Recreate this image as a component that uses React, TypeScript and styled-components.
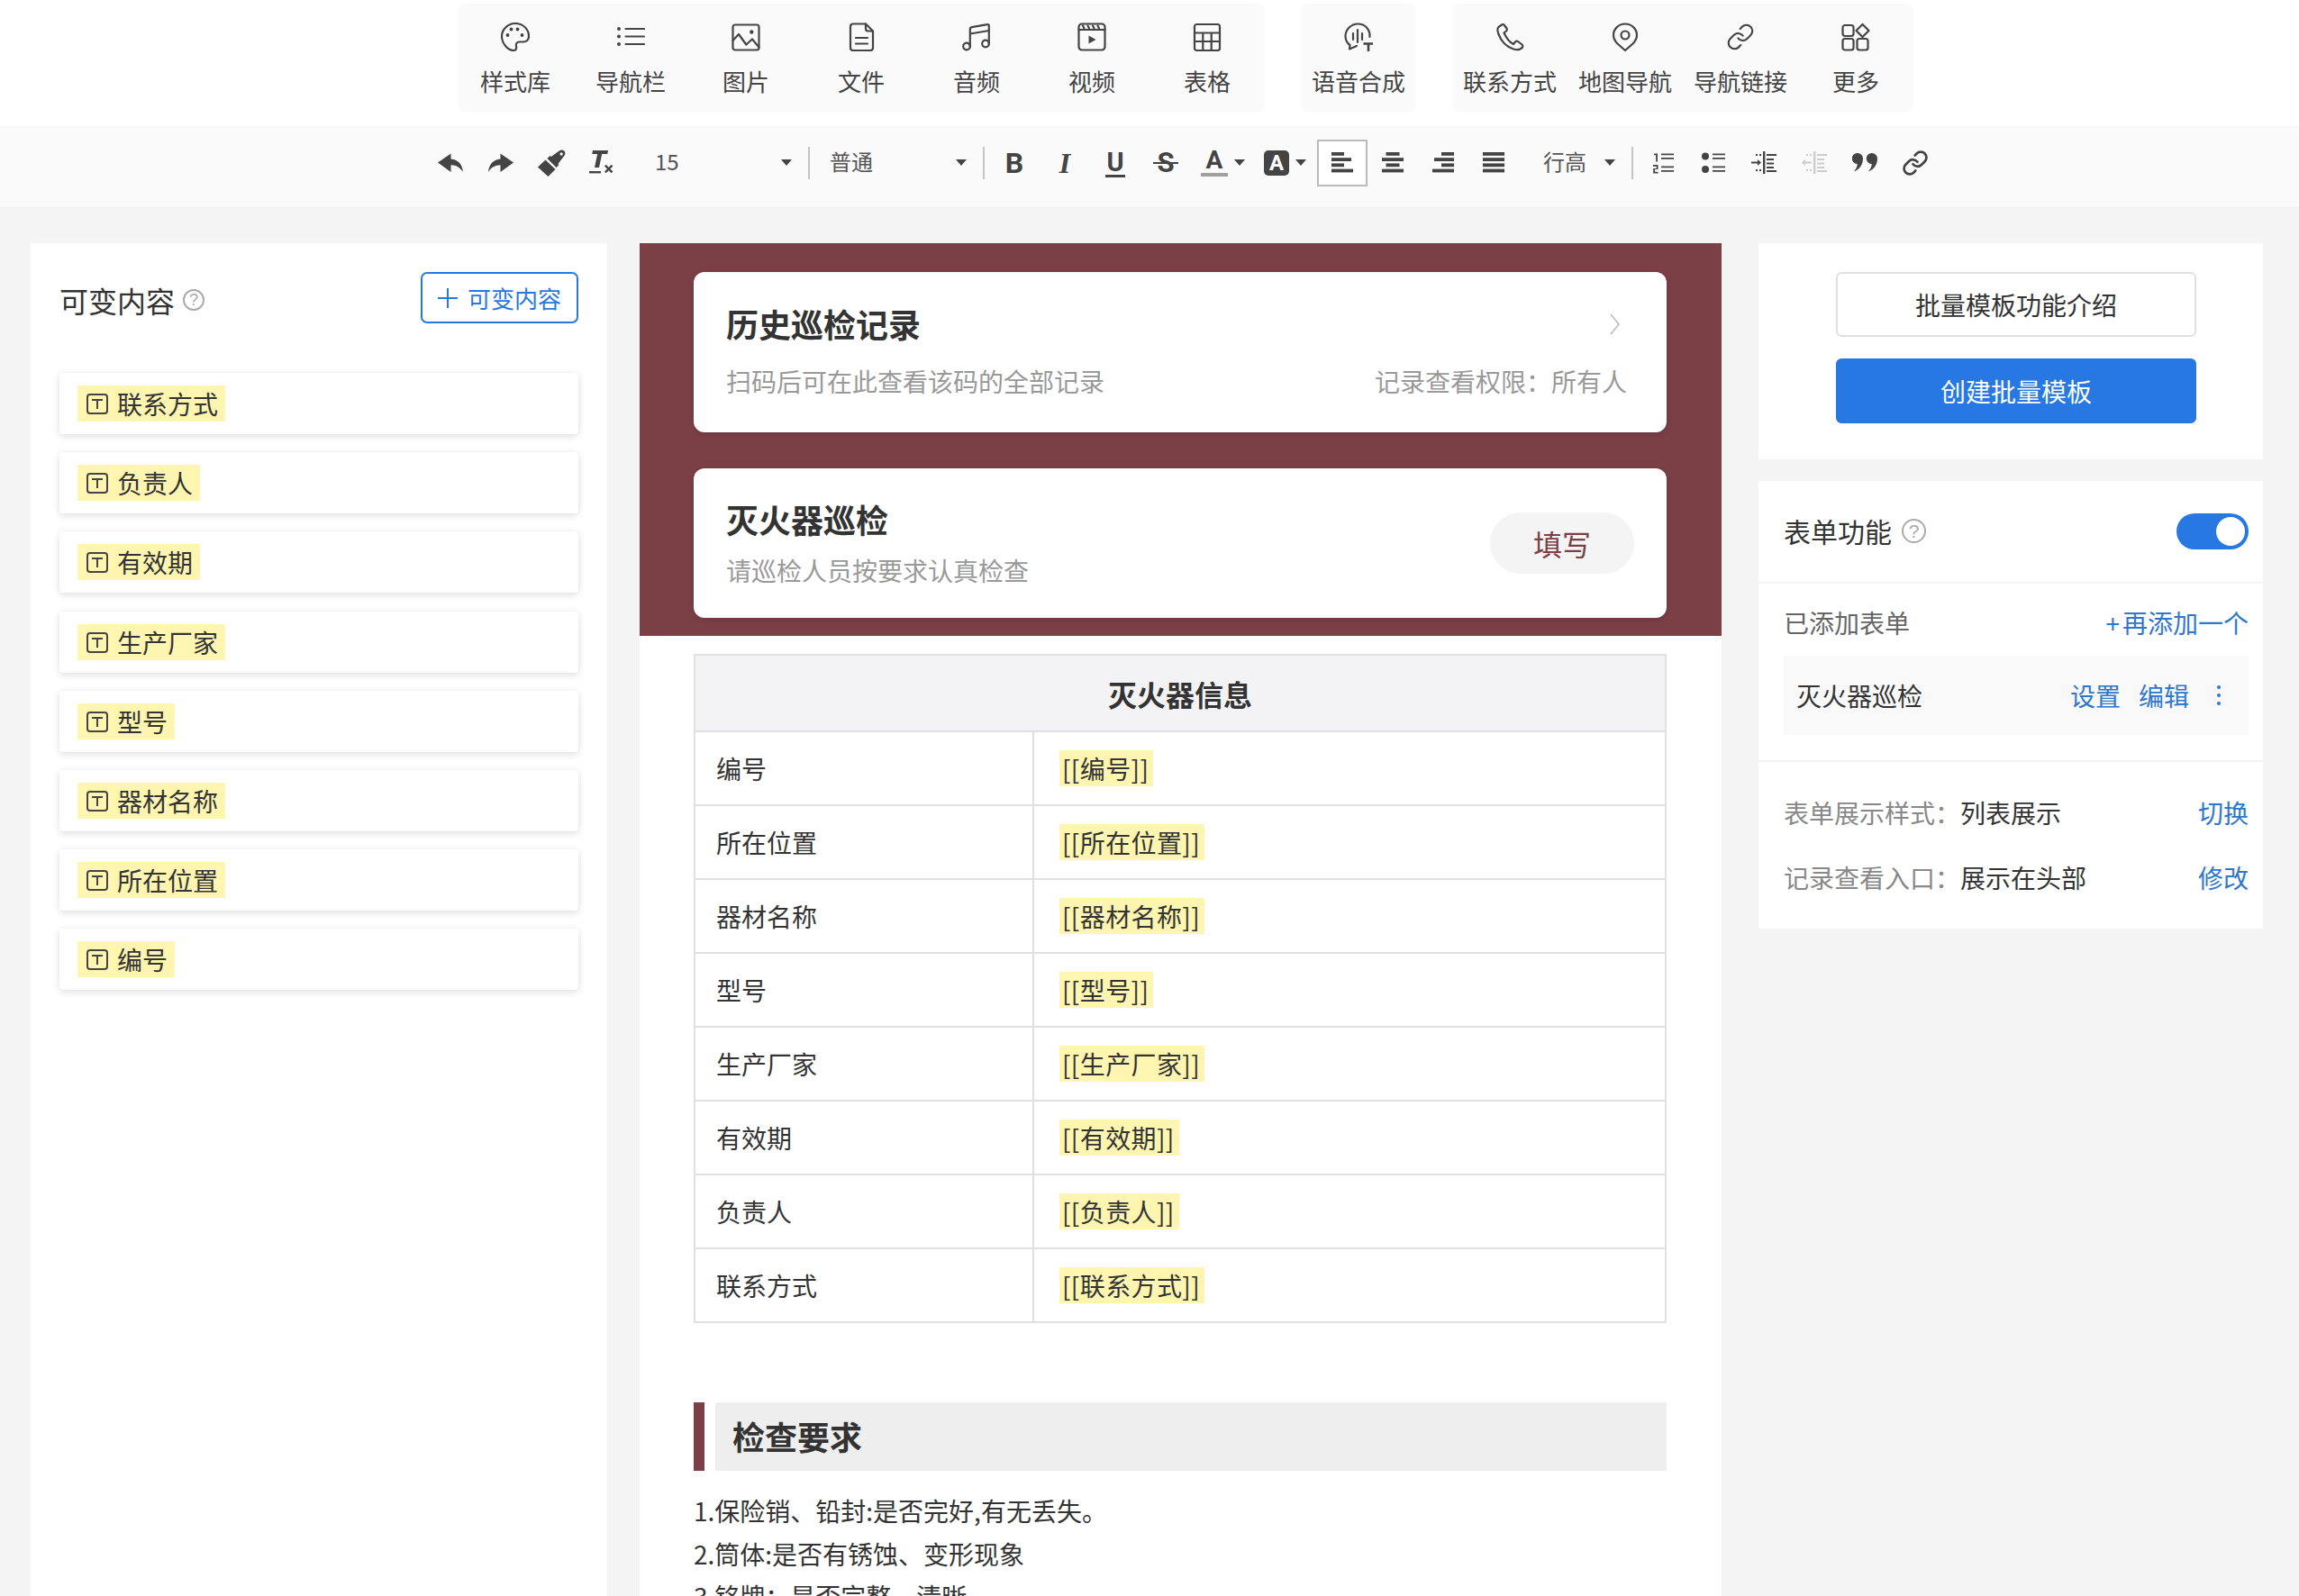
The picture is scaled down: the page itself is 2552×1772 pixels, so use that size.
import React from 'react';
import styled, { createGlobalStyle } from 'styled-components';

const GlobalStyle = createGlobalStyle`
  html, body {
    margin: 0;
    padding: 0;
    background: #f4f4f4;
    overflow: hidden;
  }
  * { box-sizing: border-box; }
`;

const Page = styled.div`
  width: 2552px;
  height: 1772px;
  display: flex;
  flex-direction: column;
  overflow: hidden;
  font-family: 'Noto Sans CJK SC', sans-serif;
  color: #333;
`;

/* top insert bar */
const InsertBar = styled.div`
  height: 140px;
  flex: none;
  background: #fff;
  padding: 4px 0 0 508px;
  display: flex;
  gap: 40px;
`;

const ToolGroup = styled.div`
  height: 120px;
  display: flex;
  background: #fafafa;
  border-radius: 8px;
`;

const ToolItem = styled.div`
  width: 128px;
  padding-top: 21px;
  display: flex;
  flex-direction: column;
  align-items: center;
  gap: 15px;
`;

const ToolLabel = styled.span`
  font-size: 26px;
  line-height: 36px;
  color: #444;
  white-space: nowrap;
`;

const LineIcon = styled.svg`
  width: 32px;
  height: 32px;
  fill: none;
  stroke: #444;
  stroke-width: 2.2;
  stroke-linecap: round;
  stroke-linejoin: round;
  display: block;
`;

const ChainIcon = styled(LineIcon)`
  width: 30px;
  height: 30px;
`;

const Solid = styled.g`
  fill: #444;
  stroke: none;
`;

/* format toolbar */
const FormatBar = styled.div`
  height: 90px;
  flex: none;
  background: #fafafa;
  border-top: 1px solid #f5f5f5;
  padding: 0 0 10px 472px;
  display: flex;
  align-items: center;
`;

const FmtButton = styled.div<{ $active?: boolean }>`
  width: 56px;
  height: 52px;
  flex: none;
  display: flex;
  align-items: center;
  justify-content: center;
  background: ${(p) => (p.$active ? '#fff' : 'transparent')};
  border: ${(p) => (p.$active ? '2px solid #bbb' : 'none')};
  color: #444;
`;

const ColorButton = styled.div`
  width: 70px;
  height: 52px;
  flex: none;
  padding-left: 11px;
  display: flex;
  align-items: center;
  gap: 7px;
`;

const Picker = styled.div<{ $width: number; $left: number }>`
  width: ${(p) => p.$width}px;
  flex: none;
  padding: 0 18px 0 ${(p) => p.$left}px;
  display: flex;
  align-items: center;
  justify-content: space-between;
  font-size: 24px;
  color: #555;
`;

const PickerLabel = styled.span`
  margin-bottom: 5px;
`;

const Caret = styled.i`
  width: 0;
  height: 0;
  flex: none;
  border-left: 6px solid transparent;
  border-right: 6px solid transparent;
  border-top: 7px solid #444;
`;

const Divider = styled.div<{ $after?: number }>`
  width: 2px;
  height: 36px;
  flex: none;
  background: #c4c4c4;
  margin-right: ${(p) => p.$after ?? 0}px;
`;

const Glyph = styled.span<{ $size: number; $serif?: boolean }>`
  font-family: ${(p) => (p.$serif ? "'Liberation Serif'" : 'Roboto')}, sans-serif;
  font-size: ${(p) => p.$size}px;
  font-weight: 700;
  font-style: ${(p) => (p.$serif ? 'italic' : 'normal')};
  line-height: 1;
  color: #444;
`;

const UnderGlyph = styled(Glyph)`
  border-bottom: 3px solid #444;
  padding: 0 1px 2px;
  line-height: 24px;
  margin-top: 3px;
`;

const StrikeGlyph = styled(Glyph)`
  position: relative;
  &::after {
    content: '';
    position: absolute;
    left: -4px;
    right: -4px;
    top: 15px;
    height: 2px;
    background: #444;
  }
`;

const ColorA = styled.span`
  width: 30px;
  display: flex;
  flex-direction: column;
  align-items: center;
  font-family: Roboto, sans-serif;
  font-weight: 700;
  font-size: 28px;
  line-height: 26px;
  color: #444;
  &::after {
    content: '';
    width: 30px;
    height: 4px;
    margin-top: 1px;
    background: #a0a0a0;
  }
`;

const BoxA = styled.span`
  width: 28px;
  height: 28px;
  border-radius: 5px;
  background: #444;
  color: #fff;
  display: flex;
  align-items: center;
  justify-content: center;
  font-family: Roboto, sans-serif;
  font-weight: 700;
  font-size: 24px;
  line-height: 1;
`;

const FilledIcon = styled.svg<{ $color?: string }>`
  display: block;
  fill: ${(p) => p.$color ?? '#444'};
  stroke: none;
`;

/* columns */
const Body = styled.div`
  flex: 1;
  min-height: 0;
  display: flex;
  padding: 40px 0 0 34px;
  background: #f4f4f4;
`;

const LeftPanel = styled.div`
  width: 640px;
  flex: none;
  background: #fff;
  padding: 32px;
`;

const PanelHead = styled.div`
  height: 57px;
  display: flex;
  align-items: center;
  justify-content: space-between;
`;

const PanelTitle = styled.div`
  display: flex;
  align-items: center;
  gap: 9px;
  font-size: 32px;
  line-height: 44px;
  padding-top: 5px;
  color: #333;
`;

const Help = styled.span<{ $size: number }>`
  width: ${(p) => p.$size}px;
  height: ${(p) => p.$size}px;
  flex: none;
  border: 2px solid #aaa;
  border-radius: 50%;
  color: #aaa;
  font-family: 'Liberation Sans', sans-serif;
  font-size: ${(p) => p.$size - 6}px;
  line-height: 1;
  display: flex;
  align-items: center;
  justify-content: center;
`;

const AddButton = styled.div`
  width: 175px;
  height: 57px;
  border: 2px solid #2878e3;
  border-radius: 7px;
  display: flex;
  align-items: center;
  justify-content: center;
  gap: 11px;
  font-size: 26px;
  color: #2878e3;
`;

const PlusIcon = styled.svg`
  width: 22px;
  height: 22px;
  stroke: #2878e3;
  stroke-width: 2;
  display: block;
`;

const VarList = styled.div`
  margin-top: 55px;
  display: flex;
  flex-direction: column;
  gap: 20.2px;
`;

const VarItem = styled.div`
  height: 68px;
  background: #fff;
  border-radius: 4px;
  box-shadow: 0 2px 8px rgba(0, 0, 0, 0.14);
  padding-left: 20px;
  display: flex;
  align-items: center;
`;

const VarTag = styled.span`
  height: 40px;
  background: #fdf5b0;
  padding: 0 8px 0 10px;
  display: flex;
  align-items: center;
  gap: 10px;
  font-size: 28px;
  color: #333;
`;

const TagIcon = styled.svg`
  width: 24px;
  height: 24px;
  fill: none;
  stroke: #444;
  stroke-width: 2;
  display: block;
`;

const CenterPanel = styled.div`
  width: 1201px;
  flex: none;
  margin-left: 36px;
  background: #fff;
`;

const Banner = styled.div`
  background: #7b3f46;
  padding: 32px 61px 20px 60px;
  display: flex;
  flex-direction: column;
  gap: 40px;
`;

const HistoryCard = styled.div`
  height: 178px;
  background: #fff;
  border-radius: 12px;
  box-shadow: 0 2px 6px rgba(0, 0, 0, 0.12);
  padding: 32px 44px 0 36px;
`;

const CardRow = styled.div`
  display: flex;
  align-items: center;
  justify-content: space-between;
`;

const CardTitle = styled.div`
  font-size: 36px;
  font-weight: 700;
  line-height: 50px;
  color: #333;
`;

const CardSub = styled.div<{ $top: number }>`
  font-size: 28px;
  line-height: 40px;
  color: #999;
  margin-top: ${(p) => p.$top}px;
`;

const Chevron = styled.svg`
  width: 11px;
  height: 24px;
  margin: 2px 8px 0 0;
  fill: none;
  stroke: #bbb;
  stroke-width: 1.6;
  display: block;
`;

const FormCard = styled.div`
  height: 166px;
  background: #fff;
  border-radius: 12px;
  box-shadow: 0 2px 6px rgba(0, 0, 0, 0.12);
  padding: 0 36px;
  display: flex;
  align-items: center;
  justify-content: space-between;
`;

const FormCardText = styled.div`
  padding-bottom: 2px;
`;

const FillButton = styled.div`
  width: 160px;
  height: 68px;
  border-radius: 34px;
  background: #f4f4f4;
  color: #7b3f46;
  font-size: 32px;
  display: flex;
  align-items: center;
  justify-content: center;
`;

const Content = styled.div`
  padding: 20px 61px 0 60px;
`;

const InfoTable = styled.table`
  width: 1080px;
  border-collapse: collapse;
  table-layout: fixed;
  border: 2px solid #e0e0e0;
  font-size: 28px;
  color: #333;
  th, td {
    border: 2px solid #e0e0e0;
    font-weight: 400;
    padding: 0;
  }
  th {
    height: 85px;
    background: #f3f3f5;
    font-size: 32px;
    font-weight: 700;
  }
  td {
    height: 82px;
    padding-left: 23px;
  }
  td + td {
    padding-left: 28px;
  }
`;

const Mark = styled.span`
  display: inline-block;
  height: 40px;
  line-height: 40px;
  padding: 0 5px 0 3px;
  letter-spacing: 0.4px;
  background: #fdf5b0;
`;

const Heading = styled.div`
  margin-top: 88px;
  height: 76px;
  display: flex;
  gap: 12px;
  &::before {
    content: '';
    width: 12px;
    background: #7b3f46;
  }
`;

const HeadingText = styled.div`
  flex: 1;
  background: #eee;
  padding-left: 19px;
  font-size: 36px;
  font-weight: 700;
  line-height: 74px;
  color: #333;
`;

const Notes = styled.div`
  margin-top: 21px;
  font-size: 28px;
  line-height: 47.5px;
  color: #333;
`;

const RightColumn = styled.div`
  width: 560px;
  flex: none;
  margin-left: 41px;
  display: flex;
  flex-direction: column;
  gap: 24px;
`;

const BatchCard = styled.div`
  background: #fff;
  padding: 32px 0 40px 86px;
  display: flex;
  flex-direction: column;
  gap: 24px;
`;

const BatchButton = styled.div<{ $primary?: boolean }>`
  width: 400px;
  height: 72px;
  border-radius: 6px;
  border: 2px solid ${(p) => (p.$primary ? '#2878e3' : '#e0e0e0')};
  background: ${(p) => (p.$primary ? '#2878e3' : '#fff')};
  color: ${(p) => (p.$primary ? '#fff' : '#333')};
  font-size: 28px;
  display: flex;
  align-items: center;
  justify-content: center;
`;

const FormPanel = styled.div`
  background: #fff;
`;

const Section = styled.div`
  padding: 0 16px 0 28px;
  & + & {
    border-top: 2px solid #f4f4f4;
  }
`;

const SwitchRow = styled.div`
  height: 112px;
  display: flex;
  align-items: center;
  justify-content: space-between;
`;

const SwitchLabel = styled.div`
  display: flex;
  align-items: center;
  gap: 11px;
  padding-bottom: 2px;
  font-size: 30px;
  color: #333;
`;

const Toggle = styled.div`
  width: 80px;
  height: 40px;
  border-radius: 20px;
  background: #2878e3;
  padding: 4px;
  display: flex;
  justify-content: flex-end;
  &::after {
    content: '';
    width: 32px;
    height: 32px;
    border-radius: 50%;
    background: #fff;
  }
`;

const AddedHead = styled.div`
  padding-top: 23px;
  height: 80px;
  display: flex;
  justify-content: space-between;
  font-size: 28px;
  line-height: 40px;
  color: #666;
`;

const LinkText = styled.span`
  color: #2f77cc;
  font-size: 28px;
  line-height: 40px;
  white-space: nowrap;
`;

const LinkPlus = styled.span`
  margin-right: 3px;
`;

const FormRow = styled.div`
  height: 88px;
  margin-bottom: 28px;
  background: #f9f9f9;
  padding: 0 31px 0 14px;
  display: flex;
  align-items: center;
  font-size: 28px;
  color: #333;
`;

const FormName = styled.span`
  flex: 1;
`;

const RowActions = styled.div`
  display: flex;
  align-items: center;
  gap: 20px;
`;

const Kebab = styled.span`
  width: 4px;
  margin-left: 11px;
  display: flex;
  flex-direction: column;
  gap: 5px;
  i {
    width: 4px;
    height: 4px;
    border-radius: 50%;
    background: #2f77cc;
  }
`;

const SettingRows = styled.div`
  padding: 36px 0 37px;
  display: flex;
  flex-direction: column;
  gap: 32px;
`;

const SettingRow = styled.div`
  display: flex;
  font-size: 28px;
  line-height: 40px;
`;

const SettingKey = styled.span`
  width: 196px;
  flex: none;
  color: #888;
  white-space: nowrap;
`;

const SettingValue = styled.span`
  flex: 1;
  color: #333;
`;

/* icons */
const linkPaths = (
  <>
    <path d="M10 13a5 5 0 0 0 7.54.54l3-3a5 5 0 0 0-7.07-7.07l-1.72 1.71" />
    <path d="M14 11a5 5 0 0 0-7.54-.54l-3 3a5 5 0 0 0 7.07 7.07l1.71-1.71" />
  </>
);

const tools: [string, React.ReactNode][] = [
  ['样式库', (
    <>
      <path d="M16 1C8 1 1 7.5 1 15.5 1 23.5 8 31 14 31c3 0 3.5-2.5 3-5-.5-3 1-4.5 4-4.5h4c3.5 0 6-2.5 6-6.5C31 7 24 1 16 1Z" />
      <Solid>
        <circle cx="7.5" cy="14" r="1.9" />
        <circle cx="11.5" cy="7.5" r="1.9" />
        <circle cx="18.5" cy="7.5" r="1.9" />
        <circle cx="23.5" cy="14" r="1.9" />
      </Solid>
    </>
  )],
  ['导航栏', (
    <>
      <path d="M10.5 7H31M10.5 15.5H31M10.5 24H31" />
      <Solid>
        <circle cx="3" cy="7" r="2" />
        <circle cx="3" cy="15.5" r="2" />
        <circle cx="3" cy="24" r="2" />
      </Solid>
    </>
  )],
  ['图片', (
    <>
      <rect x="1.5" y="2.5" width="29" height="28" rx="2.5" />
      <path d="M1.5 20 8 13l8.3 11.5L23 18.5l7.5 9" />
      <Solid><circle cx="22.3" cy="10.5" r="2.2" /></Solid>
    </>
  )],
  ['文件', (
    <>
      <path d="M7 1.5h14l8 8V28a3 3 0 0 1-3 3H7a3 3 0 0 1-3-3V4.5a3 3 0 0 1 3-3Z" />
      <path d="M21 1.5V7a2.5 2.5 0 0 0 2.5 2.5H29M10 17h13M10 23.5h13" />
    </>
  )],
  ['音频', (
    <>
      <circle cx="5" cy="26.5" r="3.8" />
      <circle cx="26" cy="23.5" r="3.8" />
      <path d="M8.8 26.5V7.5c0-1.3.8-2.2 2-2.4L28 2.2c1-.2 1.8.4 1.8 1.4v20M8.8 12.5l21-3.5" />
    </>
  )],
  ['视频', (
    <>
      <rect x="1.5" y="1.5" width="29" height="29" rx="3.5" />
      <path d="M1.5 8h29M6 3.5l1.5 3M11.5 3.5l1.5 3M17 3.5l1.5 3M22.5 3.5l1.5 3" />
      <Solid><path d="M12.5 14.5l8 4.5-8 4.5Z" /></Solid>
    </>
  )],
  ['表格', (
    <>
      <rect x="2" y="2" width="28" height="29" rx="2.5" />
      <path d="M2 11.5h28M2 21h28M11.3 11.5V31M20.7 11.5V31" />
    </>
  )],
];

const ttsItem: [string, React.ReactNode] = ['语音合成', (
  <>
    <path d="M28.5 16C29 7.5 23 1.5 15.5 1.5 8 1.5 1.5 7.5 1.5 15c0 4.5 2 8 5 10l-.5 4.5 8-3.5" />
    <path d="M10 12v7M15 8v14M20 12v7" />
    <path strokeWidth="2.6" d="M22.5 23.5h9M27 23.5V32" />
  </>
)];

const contactTools: [string, React.ReactNode][] = [
  ['联系方式', (
    <path d="M7 2.5 3.5 5C1.8 6.5 2 9 3.5 13c2.5 7 8.5 14 16.5 16.5 5 1.5 8 .5 10-2 .5-1 .5-2-.5-3L25 21c-1-.5-2-.5-3 .5L20 24c-5-2.5-8-7-10.5-12.5L12 9.5c1-1 1-2 .5-3l-3-4c-.5-.5-1.5-.5-2.5 0Z" />
  )],
  ['地图导航', (
    <g transform="translate(1 0)">
      <path d="M15 31 6.5 23.5C3.5 20.5 2 17.5 2 14 2 7 8 1.5 15 1.5S28 7 28 14c0 3.5-1.5 6.5-4.5 9.5Z" />
      <circle cx="15" cy="14" r="4.5" />
    </g>
  )],
  ['导航链接', (
    <g transform="scale(1.333)" strokeWidth="1.6">{linkPaths}</g>
  )],
  ['更多', (
    <>
      <rect x="1.5" y="3" width="12" height="12" rx="2.5" />
      <rect x="1.5" y="18" width="12" height="12.5" rx="2.5" />
      <rect x="17.5" y="18" width="12" height="12.5" rx="2.5" />
      <path d="M23.5 2 30.5 9l-7 7-7-7Z" />
    </>
  )],
];

const ToolCell = ({ label, icon }: { label: string; icon: React.ReactNode }) => (
  <ToolItem>
    <LineIcon viewBox="0 0 32 32">{icon}</LineIcon>
    <ToolLabel>{label}</ToolLabel>
  </ToolItem>
);

const undoPath = 'M0 10.5 14.5.5v6C22 7 27 12 28 21c-3-5-7.5-7.5-13.5-7.7V21Z';

const Bars = ({ rows }: { rows: [number, number][] }) => (
  <FilledIcon width="24" height="23" viewBox="0 0 24 23">
    {rows.map(([x, w], i) => (
      <rect key={i} x={x} y={i * 6.2} width={w} height="3.8" />
    ))}
  </FilledIcon>
);

const DoubleLines = () => (
  <path d="M0 0h14v1.8H0zM0 4.5h14v1.8H0zM0 14h14v1.8H0zM0 18.5h14v1.8H0z" />
);

const IndentIcon = ({ out }: { out?: boolean }) => (
  <FilledIcon $color={out ? '#ccc' : '#444'} width="28" height="25" viewBox="0 0 28 25">
    <rect x="13" width="2.4" height="25" />
    <path d="M17 3h11v2H17zM17 8h8v2h-8zM17 12.5h8v2h-8zM17 17h8v2h-8zM17 21h11v2H17z" />
    <path d="M5 3h2v2H5zM9 3h2v2H9zM5 20h2v2H5zM9 20h2v2H9z" />
    {out ? (
      <path d="M0 12.5l4-3.5v2.5h7v2H4V16Z" />
    ) : (
      <path d="M11 12.5l-4-3.500v2.500H0v2h7V16Z" />
    )}
  </FilledIcon>
);

const QuoteShape = 'M6 0a6 6 0 0 1 6 6c0 7-4 12-10 14.5 3-3.5 4-6.5 3.5-8.5A6 6 0 0 1 6 0Z';

const variables = ['联系方式', '负责人', '有效期', '生产厂家', '型号', '器材名称', '所在位置', '编号'];
const rows = ['编号', '所在位置', '器材名称', '型号', '生产厂家', '有效期', '负责人', '联系方式'];

const App = () => {
  return (
    <Page>
      <GlobalStyle />
      <InsertBar>
        <ToolGroup>
          {tools.map(([label, icon]) => <ToolCell key={label} label={label} icon={icon} />)}
        </ToolGroup>
        <ToolGroup>
          <ToolCell label={ttsItem[0]} icon={ttsItem[1]} />
        </ToolGroup>
        <ToolGroup>
          {contactTools.map(([label, icon]) => <ToolCell key={label} label={label} icon={icon} />)}
        </ToolGroup>
      </InsertBar>

      <FormatBar>
        <FmtButton>
          <FilledIcon width="28" height="22" viewBox="0 0 28 22"><path d={undoPath} /></FilledIcon>
        </FmtButton>
        <FmtButton>
          <FilledIcon width="28" height="22" viewBox="0 0 28 22">
            <path transform="matrix(-1 0 0 1 28 0)" d={undoPath} />
          </FilledIcon>
        </FmtButton>
        <FmtButton>
          <FilledIcon width="31" height="30" viewBox="0 0 31 30">
            <path d="M0 19.5 8.5 11.5 19.5 22 11.5 30Z" />
            <path d="M10.5 10l3-3 10 10-3 3Z" />
            <path d="M14 8.5 23.8 1.5c1.5-1.5 4-1.5 5.5 0s1.5 4 0 5.5L22 16.5ZM25 3.8a1.6 1.6 0 1 0 2.3 2.3A1.6 1.6 0 0 0 25 3.8Z" fillRule="evenodd" />
          </FilledIcon>
        </FmtButton>
        <FmtButton>
          <FilledIcon width="28" height="28" viewBox="0 0 28 28">
            <path d="M4 0h17l-.8 4h-6L11 19H6L9.2 4h-6Z" />
            <path d="M0 23h13v2.4H0z" />
            <path d="M17 17.5l1.7-1.7 3 3 3-3 1.7 1.7-3 3 3 3-1.7 1.7-3-3-3 3-1.7-1.7 3-3Z" />
          </FilledIcon>
        </FmtButton>
        <Picker $width={201} $left={31}><PickerLabel>15</PickerLabel><Caret /></Picker>
        <Divider />
        <Picker $width={192} $left={22}><PickerLabel>普通</PickerLabel><Caret /></Picker>
        <Divider $after={5} />
        <FmtButton><Glyph $size={32}>B</Glyph></FmtButton>
        <FmtButton><Glyph $size={32} $serif>I</Glyph></FmtButton>
        <FmtButton><UnderGlyph $size={29}>U</UnderGlyph></FmtButton>
        <FmtButton><StrikeGlyph $size={31}>S</StrikeGlyph></FmtButton>
        <ColorButton><ColorA>A</ColorA><Caret /></ColorButton>
        <ColorButton><BoxA>A</BoxA><Caret /></ColorButton>
        <FmtButton $active>
          <Bars rows={[[0, 14], [0, 22], [0, 14], [0, 24]]} />
        </FmtButton>
        <FmtButton>
          <Bars rows={[[4.5, 15], [0, 24], [4.5, 15], [0, 24]]} />
        </FmtButton>
        <FmtButton>
          <Bars rows={[[10, 14], [2, 22], [10, 14], [0, 24]]} />
        </FmtButton>
        <FmtButton>
          <Bars rows={[[0, 24], [0, 24], [0, 24], [0, 24]]} />
        </FmtButton>
        <Picker $width={125} $left={27}><PickerLabel>行高</PickerLabel><Caret /></Picker>
        <Divider $after={5} />
        <FmtButton>
          <FilledIcon width="24" height="24" viewBox="0 0 24 24">
            <g transform="translate(10 1.5)"><DoubleLines /></g>
            <path d="M2 1.5h4v9H4.2V3.3H2z" />
            <path d="M1 14h5.5v5H3v2.8h3.5v1.7H1.2V18h3.500v-2.300H1z" />
          </FilledIcon>
        </FmtButton>
        <FmtButton>
          <FilledIcon width="26" height="24" viewBox="0 0 26 24">
            <circle cx="4" cy="4.5" r="4" />
            <circle cx="4" cy="19" r="4" />
            <g transform="translate(12 1.5)"><DoubleLines /></g>
          </FilledIcon>
        </FmtButton>
        <FmtButton><IndentIcon /></FmtButton>
        <FmtButton><IndentIcon out /></FmtButton>
        <FmtButton>
          <FilledIcon width="28" height="21" viewBox="0 0 28 21">
            <path d={QuoteShape} />
            <path transform="translate(16 0)" d={QuoteShape} />
          </FilledIcon>
        </FmtButton>
        <FmtButton>
          <ChainIcon viewBox="0 0 24 24">{linkPaths}</ChainIcon>
        </FmtButton>
      </FormatBar>

      <Body>
        <LeftPanel>
          <PanelHead>
            <PanelTitle>可变内容<Help $size={24}>?</Help></PanelTitle>
            <AddButton>
              <PlusIcon viewBox="0 0 22 22"><path d="M11 0v22M0 11h22" /></PlusIcon>
              可变内容
            </AddButton>
          </PanelHead>
          <VarList>
            {variables.map((v) => (
              <VarItem key={v}>
                <VarTag>
                  <TagIcon viewBox="0 0 24 24">
                    <rect x="1" y="2" width="22" height="21" rx="3" />
                    <path d="M6 8h12M12 8v10" />
                  </TagIcon>
                  {v}
                </VarTag>
              </VarItem>
            ))}
          </VarList>
        </LeftPanel>

        <CenterPanel>
          <Banner>
            <HistoryCard>
              <CardRow>
                <CardTitle>历史巡检记录</CardTitle>
                <Chevron viewBox="0 0 11 24"><path d="M1 1l9 11-9 11" /></Chevron>
              </CardRow>
              <CardRow>
                <CardSub $top={19}>扫码后可在此查看该码的全部记录</CardSub>
                <CardSub $top={19}>记录查看权限：所有人</CardSub>
              </CardRow>
            </HistoryCard>
            <FormCard>
              <FormCardText>
                <CardTitle>灭火器巡检</CardTitle>
                <CardSub $top={12}>请巡检人员按要求认真检查</CardSub>
              </FormCardText>
              <FillButton>填写</FillButton>
            </FormCard>
          </Banner>
          <Content>
            <InfoTable>
              <colgroup>
                <col width="376" />
                <col />
              </colgroup>
              <thead>
                <tr><th colSpan={2}>灭火器信息</th></tr>
              </thead>
              <tbody>
                {rows.map((r) => (
                  <tr key={r}>
                    <td>{r}</td>
                    <td><Mark>[[{r}]]</Mark></td>
                  </tr>
                ))}
              </tbody>
            </InfoTable>
            <Heading><HeadingText>检查要求</HeadingText></Heading>
            <Notes>
              <div>1.保险销、铅封:是否完好,有无丢失。</div>
              <div>2.筒体:是否有锈蚀、变形现象</div>
              <div>3.铭牌：是否完整、清晰</div>
            </Notes>
          </Content>
        </CenterPanel>

        <RightColumn>
          <BatchCard>
            <BatchButton>批量模板功能介绍</BatchButton>
            <BatchButton $primary>创建批量模板</BatchButton>
          </BatchCard>
          <FormPanel>
            <Section>
              <SwitchRow>
                <SwitchLabel>表单功能<Help $size={27}>?</Help></SwitchLabel>
                <Toggle />
              </SwitchRow>
            </Section>
            <Section>
              <AddedHead>已添加表单<LinkText><LinkPlus>+</LinkPlus>再添加一个</LinkText></AddedHead>
              <FormRow>
                <FormName>灭火器巡检</FormName>
                <RowActions>
                  <LinkText>设置</LinkText>
                  <LinkText>编辑</LinkText>
                  <Kebab><i /><i /><i /></Kebab>
                </RowActions>
              </FormRow>
            </Section>
            <Section>
              <SettingRows>
                <SettingRow>
                  <SettingKey>表单展示样式：</SettingKey>
                  <SettingValue>列表展示</SettingValue>
                  <LinkText>切换</LinkText>
                </SettingRow>
                <SettingRow>
                  <SettingKey>记录查看入口：</SettingKey>
                  <SettingValue>展示在头部</SettingValue>
                  <LinkText>修改</LinkText>
                </SettingRow>
              </SettingRows>
            </Section>
          </FormPanel>
        </RightColumn>
      </Body>
    </Page>
  );
};

export default App;
